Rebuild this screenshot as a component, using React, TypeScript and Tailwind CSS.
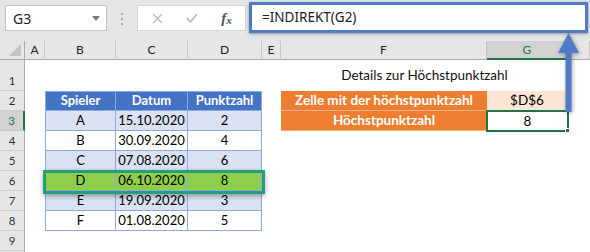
import React from "react";

const cols = "grid grid-cols-[25px_20px_71px_72px_74px_19px_206px_81px_22px]";

type Tone = "head" | "light" | "white" | "hit";

const rows: {
  n: number;
  tone?: Tone;
  cells?: [string, string, string];
  f?: string;
  g?: string;
}[] = [
  { n: 2, tone: "head", cells: ["Spieler", "Datum", "Punktzahl"], f: "Zelle mit der höchstpunktzahl", g: "$D$6" },
  { n: 3, tone: "light", cells: ["A", "15.10.2020", "2"], f: "Höchstpunktzahl", g: "8" },
  { n: 4, tone: "white", cells: ["B", "30.09.2020", "4"] },
  { n: 5, tone: "light", cells: ["C", "07.08.2020", "6"] },
  { n: 6, tone: "hit", cells: ["D", "06.10.2020", "8"] },
  { n: 7, tone: "light", cells: ["E", "19.09.2020", "3"] },
  { n: 8, tone: "white", cells: ["F", "01.08.2020", "5"] },
  { n: 9 },
];

const toneClass: Record<Tone, string> = {
  head: "bg-[#4472c4] text-white font-bold border-t",
  light: "bg-[#d9e1f2] text-black",
  white: "bg-white text-black",
  hit: "bg-[#8fce4c] text-black",
};

function RowHead({ n, active }: { n?: number; active?: boolean }) {
  return (
    <div
      className={
        "flex items-center justify-center border-b border-r text-[11.5px] " +
        (active
          ? "bg-[#d2d2d2] text-[#217346] border-b-[#c8c8c8] border-r-2 border-r-[#217346]"
          : "bg-[#e6e6e6] text-[#333] border-b-[#cfcfcf] border-r-[#ababab]")
      }
    >
      {n}
    </div>
  );
}

function ColHead({ label, active }: { label: string; active?: boolean }) {
  return (
    <div
      className={
        "flex items-center justify-center border-r border-r-[#c6c6c6] text-[12px] " +
        (active
          ? "bg-[#d2d2d2] text-[#217346] border-b-2 border-b-[#217346]"
          : "bg-[#e6e6e6] text-[#222] border-b border-b-[#ababab]")
      }
    >
      {label}
    </div>
  );
}

function Toolbar() {
  return (
    <div className="flex h-[41px] items-start bg-[#e6e6e6]">
      {/* name box */}
      <div className="ml-[5px] mt-[5px] flex h-[26px] w-[102px] items-center justify-between border border-[#c6c6c6] bg-white pl-[7px] pr-[6px]">
        <span className="text-[14px] text-[#222] [font-family:'Noto_Sans',sans-serif]">G3</span>
        <svg width="8" height="5" viewBox="0 0 8 5">
          <path d="M0 0h8L4 5z" fill="#7a7a7a" />
        </svg>
      </div>
      {/* grip dots */}
      <div className="flex w-[30px] flex-col items-center gap-[3px] pt-[13px]">
        <span className="h-[2px] w-[2px] bg-[#a8a8a8]" />
        <span className="h-[2px] w-[2px] bg-[#a8a8a8]" />
        <span className="h-[2px] w-[2px] bg-[#a8a8a8]" />
      </div>
      {/* cancel / enter / fx */}
      <div className="mt-[5px] flex h-[26px] w-[109px] items-center border border-[#d4d4d4] bg-white">
        <div className="flex w-[38px] justify-center">
          <svg width="11" height="11" viewBox="0 0 11 11">
            <path d="M1 1l9 9M10 1l-9 9" stroke="#b9b9b9" strokeWidth="1.3" />
          </svg>
        </div>
        <div className="flex w-[32px] justify-center">
          <svg width="12" height="10" viewBox="0 0 12 10">
            <path d="M1 5l3.5 4L11 1" stroke="#b9b9b9" strokeWidth="1.6" fill="none" />
          </svg>
        </div>
        <div className="flex flex-1 justify-center text-[#555] [font-family:'Liberation_Serif',serif] italic">
          <span className="text-[15px] font-bold leading-none">f</span>
          <span className="mt-[4px] text-[11px] font-bold leading-none">x</span>
        </div>
      </div>
      {/* formula bar */}
      <div className="ml-[3px] mt-[2px] flex h-[31px] w-[339px] items-center border-[3px] border-[#4f7bc8] bg-white pl-[10px] shadow-[0_1px_3px_rgba(0,0,0,0.35)]">
        <span className="text-[13.5px] text-[#222] [font-family:'Noto_Sans',sans-serif]">=INDIREKT(G2)</span>
      </div>
    </div>
  );
}

export default function App() {
  return (
    <div className="relative h-[252px] w-[590px] overflow-hidden bg-white [font-family:Lato,sans-serif]">
      <Toolbar />

      <div className={cols + " grid-rows-[19px_31px_repeat(8,20px)_20px] text-[13px]"}>
        {/* column headers */}
        <div className="relative border-b border-r border-b-[#ababab] border-r-[#ababab] bg-[#e6e6e6]">
          <svg className="absolute bottom-[3px] right-[3px]" width="12" height="12" viewBox="0 0 12 12">
            <path d="M12 0v12H0z" fill="#c3c3c3" />
          </svg>
        </div>
        {["A", "B", "C", "D", "E", "F"].map((c) => (
          <ColHead key={c} label={c} />
        ))}
        <ColHead label="G" active />
        <ColHead label="" />

        {/* row 1 */}
        <div className="flex items-end justify-center border-b border-r border-b-[#cfcfcf] border-r-[#ababab] bg-[#e6e6e6] pb-[1px] text-[11.5px] text-[#333]">
          1
        </div>
        <div className="col-span-5" />
        <div className="col-span-2 flex items-end justify-center pb-[6px] text-[13.5px] text-[#111]">
          Details zur Höchstpunktzahl
        </div>
        <div />

        {rows.map((r) => (
          <React.Fragment key={r.n}>
            <RowHead n={r.n} active={r.n === 3} />
            <div />
            {r.cells && r.tone ? (
              r.cells.map((t, i) => (
                <div
                  key={i}
                  className={
                    "flex items-center justify-center border-b border-r border-[#8ea9db] " +
                    toneClass[r.tone as Tone] +
                    (i === 0 ? " border-l" : "")
                  }
                >
                  {t}
                </div>
              ))
            ) : (
              <div className="col-span-3" />
            )}
            <div />
            {r.f ? (
              <div className="flex items-center justify-center border-b border-[#f4b084] bg-[#ed7d31] text-[13.5px] font-bold text-white">
                {r.f}
              </div>
            ) : (
              <div />
            )}
            {r.g ? (
              <div
                className={
                  "flex items-center justify-center text-[13.5px] text-black " +
                  (r.n === 2 ? "border-b border-r border-[#f8cbad] bg-[#fce4d6]" : "bg-white")
                }
              >
                {r.g}
              </div>
            ) : (
              <div />
            )}
            <div />
          </React.Fragment>
        ))}
        {/* row 10, only its top edge is in view */}
        <RowHead />
      </div>

      {/* highlight frame on row 6 */}
      <div className="pointer-events-none absolute left-[43px] top-[170px] h-[24px] w-[222px] border-[3px] border-[#22a07c] shadow-[0_2px_5px_rgba(0,0,0,0.35)]" />

      {/* G3 selection */}
      <div className="pointer-events-none absolute left-[486px] top-[110px] h-[22px] w-[83px] border-2 border-[#217346]" />
      <div className="pointer-events-none absolute left-[565px] top-[128px] h-[5px] w-[5px] border border-white bg-[#217346]" />

      {/* arrow from G2 up to formula bar */}
      <svg
        className="pointer-events-none absolute left-[557px] top-[32px] drop-shadow-[1px_1px_2px_rgba(0,0,0,0.35)]"
        width="23"
        height="82"
        viewBox="0 0 23 82"
      >
        <path d="M11.5 1L22 21H14.5V80H8.5V21H1z" fill="#4f7bc8" />
      </svg>
    </div>
  );
}
